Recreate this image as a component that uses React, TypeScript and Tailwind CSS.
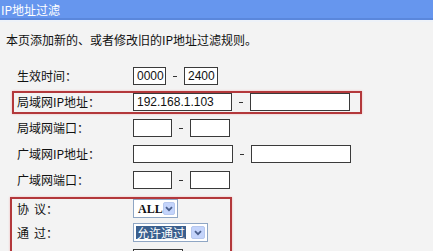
import React from 'react';

const cjk = { fontFamily: '"Noto Sans CJK SC", "Noto Sans", sans-serif' };

const TextBox = ({ w, value = '' }: { w: string; value?: string }) => (
  <input
    readOnly
    value={value}
    className={`${w} h-[18px] border border-[#3a3a3a] bg-white pl-[3px] pr-0 text-[12px] leading-[16px] text-[#111] outline-none`}
    style={{ fontFamily: '"Liberation Sans", Arial, sans-serif' }}
  />
);

const Dash = () => (
  <span className="flex w-[18px] justify-center">
    <span className="h-[1px] w-[4px] bg-[#333]" />
  </span>
);

const Arrow = () => (
  <span className="flex h-[13px] w-[14px] items-center justify-center rounded-[2px] border border-[#b7c8ee] bg-[#c4d4fb]">
    <svg width="8" height="6" viewBox="0 0 8 6">
      <path d="M1 1.2 L4 4.2 L7 1.2" fill="none" stroke="#4a5f8c" strokeWidth="1.8" />
    </svg>
  </span>
);

const Row = ({ label, children }: { label: string; children: React.ReactNode }) => (
  <div className="flex h-[26px] items-center pl-[17px]">
    <span className="w-[116px] text-[12px] text-[#111]" style={cjk}>
      {label}
    </span>
    <div className="flex items-center">{children}</div>
  </div>
);

// two-character label with the wide gap of the original page
const SpacedLabel = ({ a, b }: { a: string; b: string }) => (
  <span className="flex w-[116px] text-[12px] leading-[19px] text-[#111]">
    <span>{a}</span>
    <span className="ml-[5px]">{b}：</span>
  </span>
);

export default function App() {
  return (
    <div className="h-[251px] w-[433px] overflow-hidden bg-[#f3f3f3]" style={cjk}>
      <div className="h-[18px] bg-[#6696ee] pl-[1px] text-[12px] leading-[19px] text-white">IP地址过滤</div>
      <div className="h-[2px] bg-[#5a87dc]" />
      <div className="h-[2px] bg-[#eef2f8]" />

      <p className="mt-[10px] pl-[6px] text-[12px] leading-[16px] text-[#111]">
        本页添加新的、或者修改旧的IP地址过滤规则。
      </p>

      <div className="mt-[15px] flex flex-col">
        <Row label="生效时间：">
          <TextBox w="w-[33px]" value="0000" />
          <Dash />
          <TextBox w="w-[34px]" value="2400" />
        </Row>

        <div className="flex h-[26px] items-center">
          <div className="ml-[12px] flex h-[23px] w-[350px] items-center border-2 border-[#b3383b] pl-[3px] shadow-[0_0_2px_#f2b5b5]">
            <span className="w-[116px] text-[12px] text-[#111]">局域网IP地址：</span>
            <TextBox w="w-[99px]" value="192.168.1.103" />
            <Dash />
            <TextBox w="w-[100px]" />
          </div>
        </div>

        <Row label="局域网端口：">
          <TextBox w="w-[39px]" />
          <Dash />
          <TextBox w="w-[40px]" />
        </Row>

        <Row label="广域网IP地址：">
          <TextBox w="w-[100px]" />
          <Dash />
          <TextBox w="w-[100px]" />
        </Row>

        <Row label="广域网端口：">
          <TextBox w="w-[39px]" />
          <Dash />
          <TextBox w="w-[40px]" />
        </Row>

        <div className="ml-[10px] mt-[4px] w-[222px] border-2 border-b-0 border-[#b3383b] pl-[5px] shadow-[0_0_2px_#f2b5b5]">
          <div className="flex h-[24px] items-start">
            <SpacedLabel a="协" b="议" />
            <div className="flex h-[19px] w-[45px] items-center justify-between border border-[#8fa6c4] bg-white pl-[4px] pr-[2px]">
              <span className="text-[12px] font-bold text-[#111]" style={{ fontFamily: '"Liberation Serif", serif' }}>
                ALL
              </span>
              <Arrow />
            </div>
          </div>
          <div className="flex h-[26px] items-start">
            <SpacedLabel a="通" b="过" />
            <div className="flex h-[19px] w-[75px] items-center justify-between border border-[#8fa6c4] bg-white pl-[2px] pr-[2px]">
              <span className="bg-[#3a5f8e] px-[1px] text-[12px] leading-[13px] text-white">允许通过</span>
              <Arrow />
            </div>
          </div>
          <div className="flex h-[26px] items-start">
            <span className="w-[116px]" />
            <div className="h-[19px] w-[50px] border border-[#3a3a3a] bg-white" />
          </div>
        </div>
      </div>
    </div>
  );
}
